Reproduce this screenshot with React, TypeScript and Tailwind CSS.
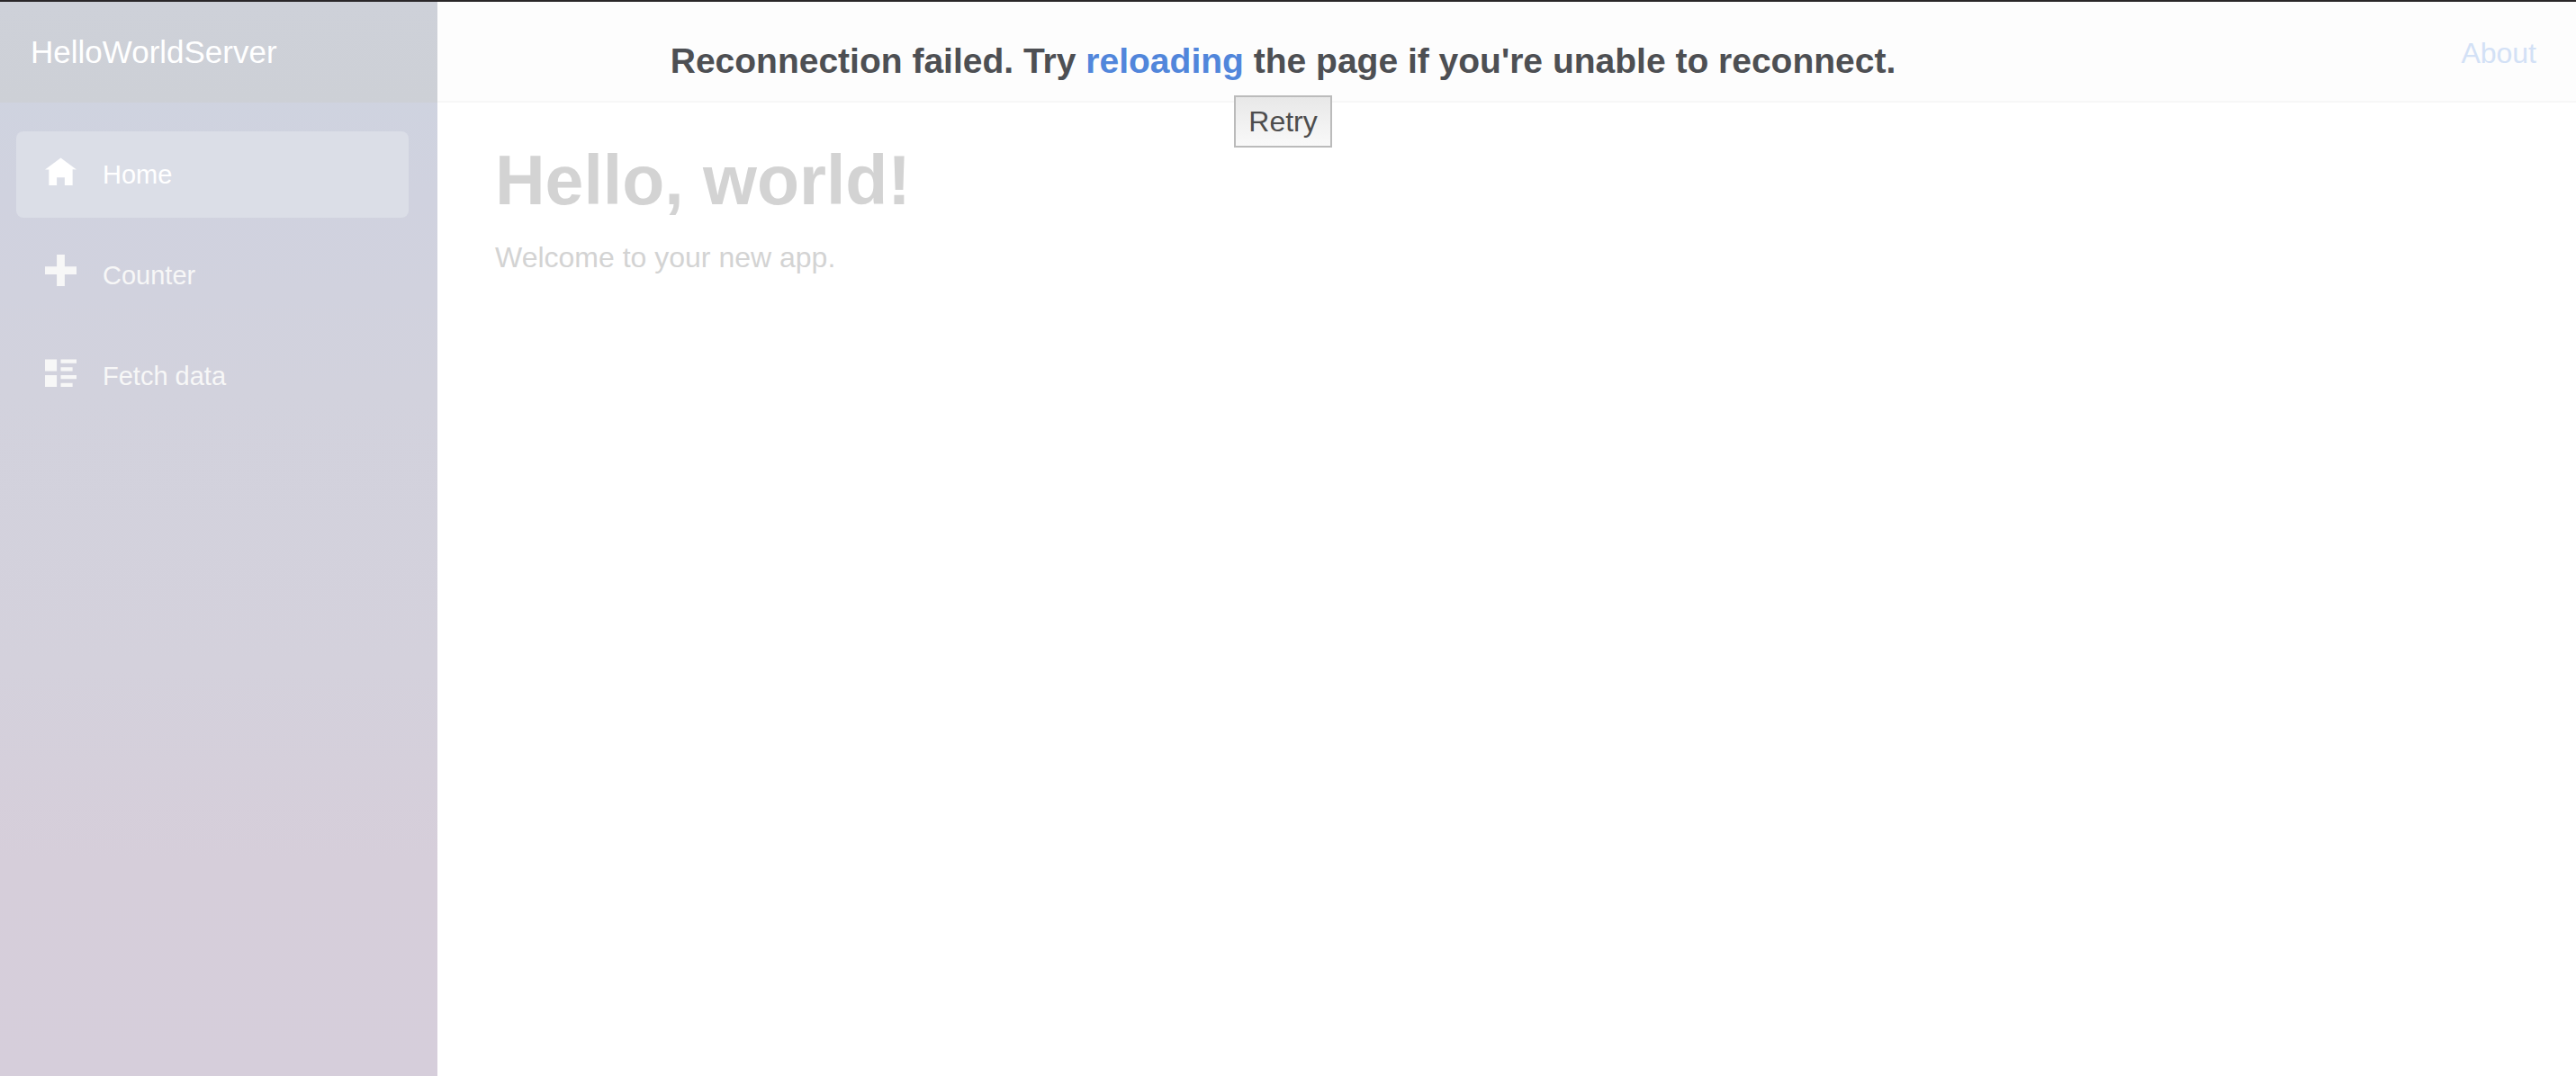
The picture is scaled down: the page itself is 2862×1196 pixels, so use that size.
import type { ReactNode } from "react";

function Icon({ children }: { children: ReactNode }) {
  return (
    <svg viewBox="0 0 8 8" className="mb-3 h-[35px] w-[35px] shrink-0" fill="currentColor" aria-hidden="true">
      {children}
    </svg>
  );
}

const links = [
  { label: "Home", active: true, icon: <path d="M4 1l-4 3h1v4h2v-2h2v2h2v-4.03l1 .03-4-3z" /> },
  { label: "Counter", active: false, icon: <path d="M3 0v3h-3v2h3v3h2v-3h3v-2h-3v-3h-2z" /> },
  {
    label: "Fetch data",
    active: false,
    icon: (
      <path d="M0 1v3h3v-3h-3zm4 0v1h4v-1h-4zm0 2v1h3v-1h-3zm-4 2v3h3v-3h-3zm4 0v1h4v-1h-4zm0 2v1h3v-1h-3z" />
    ),
  },
];

function Sidebar() {
  return (
    <aside className="w-[486px] shrink-0 bg-[linear-gradient(180deg,#ced4e0_0%,#d0d2df_18%,#d2d2dd_36%,#d4d1dc_62%,#d6ceda_80%,#d6cedb_100%)]">
      <div className="flex h-28 items-center bg-linear-to-b from-[#ced1d9] to-[#cdd0d6] px-[34px]">
        <a href="#home" className="text-[35px] leading-[52px] text-white">
          HelloWorldServer
        </a>
      </div>
      <nav className="flex flex-col gap-4 pt-8 pr-8 pl-[18px]">
        {links.map((l) => (
          <a
            key={l.label}
            href={"#" + l.label.toLowerCase().replace(" ", "-")}
            aria-current={l.active ? "page" : undefined}
            className={
              "flex h-24 items-center gap-[29px] rounded-lg px-8 text-[29px] leading-none " +
              (l.active ? "bg-[#dbdee7] text-white" : "text-[#f7f7f7]")
            }
          >
            <Icon>{l.icon}</Icon>
            {l.label}
          </a>
        ))}
      </nav>
    </aside>
  );
}

function ReconnectDialog() {
  return (
    <div role="dialog" aria-labelledby="reconnect-title" className="absolute inset-x-0 top-0 flex flex-col items-center pr-[11px]">
      <h5 id="reconnect-title" className="pt-[42px] text-[39px] leading-[48px] font-bold text-[#4d4f53]">
        Reconnection failed. Try{" "}
        <a href="#reload" className="text-[#5186db]">
          reloading
        </a>{" "}
        the page if you're unable to reconnect.
      </h5>
      <button
        type="button"
        className="mt-3.5 h-[58px] border-2 border-[#bbbbbb] bg-linear-to-b from-[#e8e8e8] to-[#f9f9f9] px-3.5 text-[32px] leading-[48px] text-[#4d4d4d]"
      >
        Retry
      </button>
    </div>
  );
}

export default function App() {
  return (
    <div className="relative flex min-h-screen border-t-2 border-[#2a2729] bg-white font-['Liberation_Sans',Arial,sans-serif]">
      <Sidebar />
      <div className="flex min-w-0 flex-1 flex-col">
        <header className="flex h-28 items-center justify-end border-b-2 border-[#f7f7f7] bg-[#fdfdfd] px-11 pt-1">
          <a href="#about" className="text-[32px] leading-[48px] text-[#d3e1f6]">
            About
          </a>
        </header>
        <main className="px-16 pt-[38px] text-[#d3d3d3]">
          <h1 className="text-[77px] leading-[96px] font-bold">Hello, world!</h1>
          <p className="mt-3.5 text-[32px] leading-[48px]">Welcome to your new app.</p>
        </main>
      </div>
      <ReconnectDialog />
    </div>
  );
}
